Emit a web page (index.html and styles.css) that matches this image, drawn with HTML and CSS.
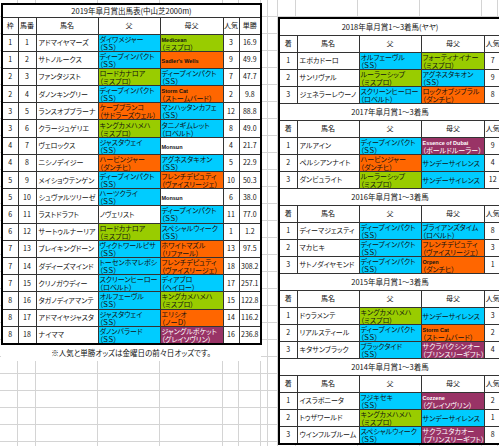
FILE: index.html
```html
<!DOCTYPE html>
<html lang="ja">
<head>
<meta charset="utf-8">
<title>2019年皐月賞出馬表</title>
<link rel="stylesheet" href="styles.css">
</head>
<body>
<div class="sheet">
  <div class="left">
    <table class="entries">
      <colgroup><col class="w16"><col class="w18"><col class="w62"><col class="w62"><col class="w63"><col class="w16"><col class="w22"></colgroup>
      <tr class="title"><td colspan="7">2019年皐月賞出馬表(中山芝2000m)</td></tr>
      <tr class="head"><td>枠</td><td>馬番</td><td>馬名</td><td>父</td><td>母父</td><td>人気</td><td>単勝</td></tr>
      <tr><td class="c">1</td><td class="c">1</td><td class="n">アドマイヤマーズ</td><td class="b s">ダイワメジャー<br>（ＳＳ）</td><td class="b g"><span class="en">Medicean</span><br>（ミスプロ）</td><td class="c">3</td><td class="c">16.9</td></tr>
      <tr><td class="c">1</td><td class="c">2</td><td class="n">サトノルークス</td><td class="b s">ディープインパクト<br>（ＳＳ）</td><td class="b o"><span class="en">Sadler's Wells</span></td><td class="c">9</td><td class="c">49.9</td></tr>
      <tr><td class="c">2</td><td class="c">3</td><td class="n">ファンタジスト</td><td class="b g">ロードカナロア<br>（ミスプロ）</td><td class="b s">ディープインパクト<br>（ＳＳ）</td><td class="c">7</td><td class="c">47.7</td></tr>
      <tr><td class="c">2</td><td class="c">4</td><td class="n">ダノンキングリー</td><td class="b s">ディープインパクト<br>（ＳＳ）</td><td class="b o"><span class="en">Storm Cat</span><br>（ストームバード）</td><td class="c">2</td><td class="c">9.8</td></tr>
      <tr><td class="c">3</td><td class="c">5</td><td class="n">ランスオブプラーナ</td><td class="b o">ケープブランコ<br>（サドラーズウェル）</td><td class="b s">マンハッタンカフェ<br>（ＳＳ）</td><td class="c">12</td><td class="c">88.8</td></tr>
      <tr><td class="c">3</td><td class="c">6</td><td class="n">クラージュゲリエ</td><td class="b g">キングカメハメハ<br>（ミスプロ）</td><td class="b s">タニノギムレット<br>（ロベルト）</td><td class="c">8</td><td class="c">49.0</td></tr>
      <tr><td class="c">4</td><td class="c">7</td><td class="n">ヴェロックス</td><td class="b s">ジャスタウェイ<br>（ＳＳ）</td><td class="b"><span class="en">Monsun</span></td><td class="c">4</td><td class="c">21.7</td></tr>
      <tr><td class="c">4</td><td class="c">8</td><td class="n">ニシノデイジー</td><td class="b o">ハービンジャー<br>（ダンチヒ）</td><td class="b s">アグネスタキオン<br>（ＳＳ）</td><td class="c">5</td><td class="c">22.9</td></tr>
      <tr><td class="c">5</td><td class="c">9</td><td class="n">メイショウテンゲン</td><td class="b s">ディープインパクト<br>（ＳＳ）</td><td class="b o">フレンチデピュティ<br>（ヴァイスリージェ）</td><td class="c">10</td><td class="c">50.3</td></tr>
      <tr><td class="c">5</td><td class="c">10</td><td class="n">シュヴァルツリーゼ</td><td class="b s">ハーツクライ<br>（ＳＳ）</td><td class="b"><span class="en">Monsun</span></td><td class="c">6</td><td class="c">38.0</td></tr>
      <tr><td class="c">6</td><td class="c">11</td><td class="n">ラストドラフト</td><td class="b">ノヴェリスト</td><td class="b s">ディープインパクト<br>（ＳＳ）</td><td class="c">11</td><td class="c">77.0</td></tr>
      <tr><td class="c">6</td><td class="c">12</td><td class="n">サートゥルナーリア</td><td class="b g">ロードカナロア<br>（ミスプロ）</td><td class="b s">スペシャルウィーク<br>（ＳＳ）</td><td class="c">1</td><td class="c">1.2</td></tr>
      <tr><td class="c">7</td><td class="c">13</td><td class="n">ブレイキングドーン</td><td class="b s">ヴィクトワールピサ<br>（ＳＳ）</td><td class="b o">ホワイトマズル<br>（リファール）</td><td class="c">13</td><td class="c">97.5</td></tr>
      <tr><td class="c">7</td><td class="c">14</td><td class="n">ダディーズマインド</td><td class="b s">トーセンホマレボシ<br>（ＳＳ）</td><td class="b o">フレンチデピュティ<br>（ヴァイスリージェ）</td><td class="c">18</td><td class="c">308.2</td></tr>
      <tr><td class="c">7</td><td class="c">15</td><td class="n">クリノガウディー</td><td class="b s">スクリーンヒーロー<br>（ロベルト）</td><td class="b s">ディアブロ<br>（ヘイロー）</td><td class="c">17</td><td class="c">257.1</td></tr>
      <tr><td class="c">8</td><td class="c">16</td><td class="n">タガノディアマンテ</td><td class="b s">オルフェーヴル<br>（ＳＳ）</td><td class="b g">キングカメハメハ<br>（ミスプロ）</td><td class="c">15</td><td class="c">122.8</td></tr>
      <tr><td class="c">8</td><td class="c">17</td><td class="n">アドマイヤジャスタ</td><td class="b s">ジャスタウェイ<br>（ＳＳ）</td><td class="b o">エリシオ<br>（ノーＤ）</td><td class="c">14</td><td class="c">116.2</td></tr>
      <tr><td class="c">8</td><td class="c">18</td><td class="n">ナイママ</td><td class="b s">ダノンバラード<br>（ＳＳ）</td><td class="b p">ジャングルポケット<br>（グレイソヴリン）</td><td class="c">16</td><td class="c">236.8</td></tr>
    </table>
    <div class="note">※人気と単勝オッズは金曜日の前々日オッズです。</div>
  </div>

  <div class="right">
    <table class="past">
      <colgroup><col class="w18"><col class="w62"><col class="w62"><col class="w62"><col class="w16"></colgroup>
      <tr class="title"><td colspan="5">2018年皐月賞1～3着馬(ヤヤ)</td></tr>
      <tr class="head"><td>着</td><td>馬名</td><td>父</td><td>母父</td><td>人気</td></tr>
      <tr><td class="c">1</td><td class="n">エポカドーロ</td><td class="b s">オルフェーヴル<br>（ＳＳ）</td><td class="b g">フォーティナイナー<br>（ミスプロ）</td><td class="c">7</td></tr>
      <tr><td class="c">2</td><td class="n">サンリヴァル</td><td class="b g">ルーラーシップ<br>（ミスプロ）</td><td class="b s">アグネスタキオン<br>（ＳＳ）</td><td class="c">9</td></tr>
      <tr><td class="c">3</td><td class="n">ジェネラーレウーノ</td><td class="b s">スクリーンヒーロー<br>（ロベルト）</td><td class="b o">ロックオブジブラル<br>（ダンチヒ）</td><td class="c">8</td></tr>

      <tr class="title"><td colspan="5">2017年皐月賞1～3着馬</td></tr>
      <tr class="head"><td>着</td><td>馬名</td><td>父</td><td>母父</td><td>人気</td></tr>
      <tr><td class="c">1</td><td class="n">アルアイン</td><td class="b s">ディープインパクト<br>（ＳＳ）</td><td class="b p"><span class="en">Essence of Dubai</span><br>（ボールドルーラー）</td><td class="c">9</td></tr>
      <tr><td class="c">2</td><td class="n">ペルシアンナイト</td><td class="b o">ハービンジャー<br>（ダンチヒ）</td><td class="b s">サンデーサイレンス</td><td class="c">4</td></tr>
      <tr><td class="c">3</td><td class="n">ダンビュライト</td><td class="b g">ルーラーシップ<br>（ミスプロ）</td><td class="b s">サンデーサイレンス</td><td class="c">12</td></tr>

      <tr class="title"><td colspan="5">2016年皐月賞1～3着馬</td></tr>
      <tr class="head"><td>着</td><td>馬名</td><td>父</td><td>母父</td><td>人気</td></tr>
      <tr><td class="c">1</td><td class="n">ディーマジェスティ</td><td class="b s">ディープインパクト<br>（ＳＳ）</td><td class="b s">ブライアンズタイム<br>（ロベルト）</td><td class="c">8</td></tr>
      <tr><td class="c">2</td><td class="n">マカヒキ</td><td class="b s">ディープインパクト<br>（ＳＳ）</td><td class="b o">フレンチデピュティ<br>（ヴァイスリージェ）</td><td class="c">3</td></tr>
      <tr><td class="c">3</td><td class="n">サトノダイヤモンド</td><td class="b s">ディープインパクト<br>（ＳＳ）</td><td class="b o"><span class="en">Orpen</span><br>（ダンチヒ）</td><td class="c">1</td></tr>

      <tr class="title"><td colspan="5">2015年皐月賞1～3着馬</td></tr>
      <tr class="head"><td>着</td><td>馬名</td><td>父</td><td>母父</td><td>人気</td></tr>
      <tr><td class="c">1</td><td class="n">ドゥラメンテ</td><td class="b g">キングカメハメハ<br>（ミスプロ）</td><td class="b s">サンデーサイレンス</td><td class="c">3</td></tr>
      <tr><td class="c">2</td><td class="n">リアルスティール</td><td class="b s">ディープインパクト<br>（ＳＳ）</td><td class="b o"><span class="en">Storm Cat</span><br>（ストームバード）</td><td class="c">2</td></tr>
      <tr><td class="c">3</td><td class="n">キタサンブラック</td><td class="b s">ブラックタイド<br>（ＳＳ）</td><td class="b p">サクラバクシンオー<br>（プリンスリーギフト）</td><td class="c">4</td></tr>

      <tr class="title"><td colspan="5">2014年皐月賞1～3着馬</td></tr>
      <tr class="head"><td>着</td><td>馬名</td><td>父</td><td>母父</td><td>人気</td></tr>
      <tr><td class="c">1</td><td class="n">イスラボニータ</td><td class="b s">フジキセキ<br>（ＳＳ）</td><td class="b p"><span class="en">Cozzene</span><br>（グレイソヴリン）</td><td class="c">2</td></tr>
      <tr><td class="c">2</td><td class="n">トゥザワールド</td><td class="b g">キングカメハメハ<br>（ミスプロ）</td><td class="b s">サンデーサイレンス</td><td class="c">1</td></tr>
      <tr><td class="c">3</td><td class="n">ウインフルブルーム</td><td class="b s">スペシャルウィーク<br>（ＳＳ）</td><td class="b p">サクラユタカオー<br>（プリンスリーギフト）</td><td class="c">8</td></tr>
    </table>
  </div>
</div>
</body>
</html>
```

FILE: styles.css
```css
html, body {
  margin: 0;
  padding: 0;
}

body {
  width: 499px;
  height: 446px;
  overflow: hidden;
  font-family: "Noto Sans CJK JP", "Liberation Sans", sans-serif;
  font-size: 7px;
  color: #111;
  font-feature-settings: "palt";
  background-color: #fff;
  background-image:
    linear-gradient(#d4d4d4, #d4d4d4),
    linear-gradient(#d4d4d4, #d4d4d4),
    linear-gradient(#d4d4d4, #d4d4d4),
    linear-gradient(#d4d4d4, #d4d4d4),
    linear-gradient(#d4d4d4, #d4d4d4),
    linear-gradient(#d4d4d4, #d4d4d4),
    linear-gradient(#d4d4d4, #d4d4d4),
    linear-gradient(#d4d4d4, #d4d4d4),
    linear-gradient(#d4d4d4, #d4d4d4),
    linear-gradient(#d4d4d4, #d4d4d4),
    linear-gradient(#d4d4d4, #d4d4d4),
    linear-gradient(#d4d4d4, #d4d4d4),
    linear-gradient(#d4d4d4, #d4d4d4),
    linear-gradient(#d4d4d4, #d4d4d4),
    repeating-linear-gradient(to bottom, transparent 0, transparent 16px, #d4d4d4 16px, #d4d4d4 17px);
  background-size:
    1px 100%, 1px 100%, 1px 100%, 1px 100%, 1px 100%, 1px 100%, 1px 100%,
    1px 100%, 1px 100%, 1px 100%, 1px 100%, 1px 100%, 1px 100%, 1px 100%,
    100% 100%;
  background-position:
    17px 0, 35px 0, 97px 0, 159px 0, 222px 0, 238px 0, 260px 0,
    267px 0, 277px 0, 295px 0, 357px 0, 419px 0, 481px 0, 497px 0,
    0 0;
  background-repeat: no-repeat;
}

.sheet {
  display: flex;
  align-items: flex-start;
}

.left {
  flex-shrink: 0;
  margin-top: 3px;
  margin-left: 1px;
  display: flex;
  flex-direction: column;
}

.right {
  flex-shrink: 0;
  margin-top: 17px;
  margin-left: 16px;
}

table {
  border-collapse: collapse;
  table-layout: fixed;
  border: 2px solid #000;
}

td {
  border: 1px solid #333;
  padding: 0;
  background: #fff;
  white-space: nowrap;
  overflow: hidden;
  vertical-align: middle;
}

.w16 { width: 16px; }
.w18 { width: 18px; }
.w22 { width: 22px; }
.w62 { width: 62px; }
.w63 { width: 63px; }

.entries tr { height: 17.2px; }
.entries tr.title { height: 13px; }
.entries tr.head { height: 17px; }

.past tr { height: 17px; }

.title td {
  text-align: center;
  font-size: 7.5px;
  line-height: 9px;
}

.head td {
  text-align: center;
  line-height: 9px;
}

.c {
  text-align: center;
  line-height: 9px;
}

.n {
  padding-left: 2px;
  line-height: 9px;
}

.b {
  padding-left: 1px;
  line-height: 8px;
}

.en {
  font-family: "Liberation Sans", sans-serif;
  font-size: 5.5px;
  font-weight: bold;
  line-height: 0;
}

.s { background: #00ccff; }
.g { background: #99cc00; }
.o { background: #ff6600; }
.p { background: #993366; color: #fff; }

.note {
  width: 260px;
  height: 16px;
  line-height: 16px;
  background: #fff;
  text-align: center;
  font-size: 7.5px;
}
```
